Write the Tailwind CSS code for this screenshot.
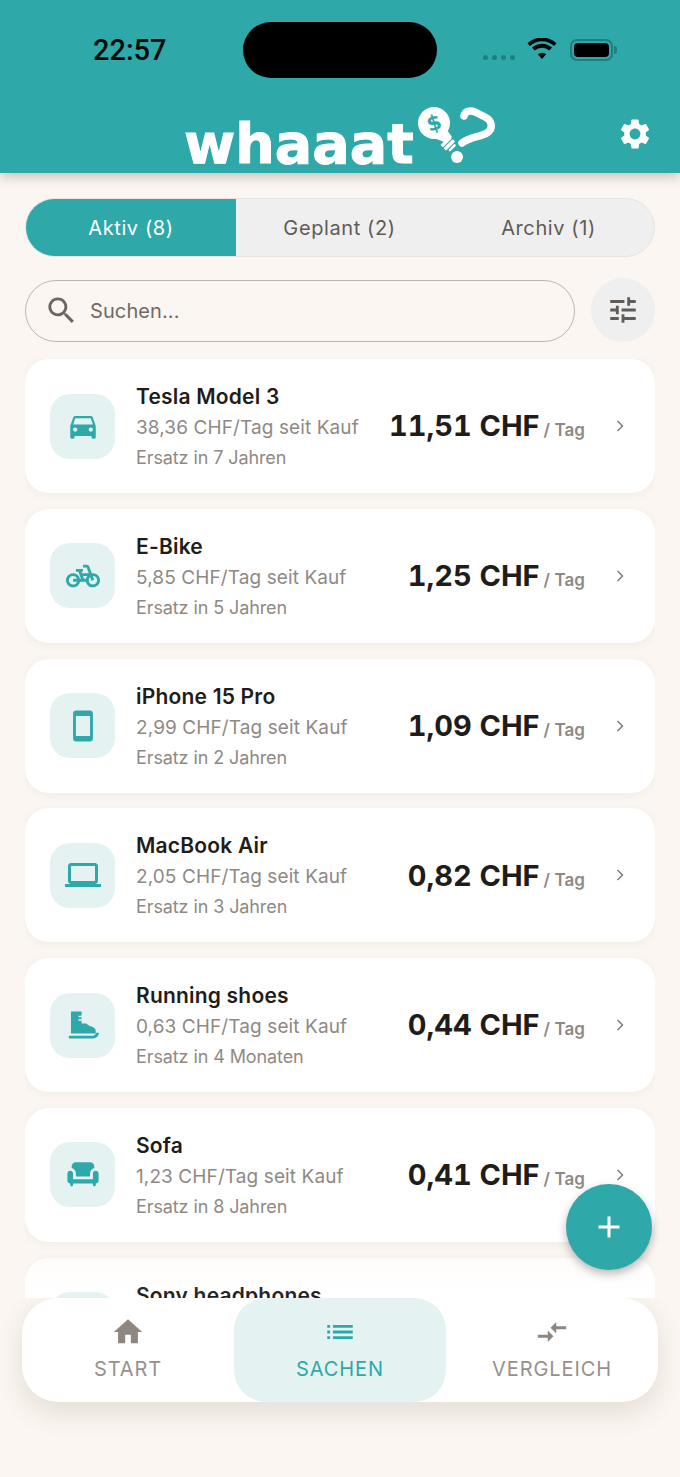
<!DOCTYPE html>
<html lang="de">
<head>
  <meta charset="UTF-8" />
  <meta name="viewport" content="width=device-width, initial-scale=1.0" />
  <title>Whaaat - Sachen</title>
  <script src="https://cdn.jsdelivr.net/npm/@tailwindcss/browser@4"></script>
</head>
<body class="bg-[#fbf6f1] text-[#1f1c1a] font-['Inter',sans-serif]">
<div class="relative w-[680px] h-[1477px] overflow-hidden flex flex-col">

  <!-- Header -->
  <header class="relative z-10 h-[173px] shrink-0 bg-[#2fa8a9] shadow-[0_3px_12px_rgba(60,50,40,0.3)]">
    <div class="flex items-start h-[100px]">
      <div class="w-[243px] pl-[93px] pt-[33px] text-[29px] leading-[34px] font-medium text-[#0a0a0a] font-['Roboto',sans-serif]">22:57</div>
      <div class="mt-[22px] w-[194px] h-[56px] rounded-[28px] bg-black"></div>
      <div class="ml-[46px] mt-[38px] flex items-center">
        <div class="flex gap-[4px] mt-[14px]">
          <span class="w-[5px] h-[5px] rounded-full bg-[#1f7f80]"></span>
          <span class="w-[5px] h-[5px] rounded-full bg-[#1f7f80]"></span>
          <span class="w-[5px] h-[5px] rounded-full bg-[#1f7f80]"></span>
          <span class="w-[5px] h-[5px] rounded-full bg-[#1f7f80]"></span>
        </div>
        <svg class="ml-[12px] mb-[2px]" width="30" height="22" viewBox="0 0 30 22"><path d="M15 21 10.800 16.200a6.400 6.400 0 0 1 8.400 0zM7.600 12.600a11 11 0 0 1 14.800 0l2.600-3a15 15 0 0 0-20 0zM.5 5.300l2.400 2.700a17.600 17.600 0 0 1 24.200 0l2.400-2.700a21 21 0 0 0-29 0z" fill="#050505"/></svg>
        <div class="ml-[13px] relative w-[43px] h-[22px] rounded-[7px] border-2 border-[#1f7f80] p-[2px]">
          <div class="w-full h-full rounded-[4px] bg-black"></div>
          <div class="absolute -right-[6px] top-[5px] w-[3px] h-[8px] rounded-r-sm bg-[#1f7f80]"></div>
        </div>
      </div>
    </div>
    <div class="relative flex h-[73px]">
      <div class="absolute left-[184px] top-[16px] text-[55.5px] leading-[56px] font-bold text-white font-['DejaVu_Sans',sans-serif] [-webkit-text-stroke:1px_white]">whaaat</div>
      <!-- bulb + question mark -->
      <svg class="absolute left-[415px] top-[6px]" width="84" height="60" viewBox="0 0 84 60">
        <circle cx="19" cy="17" r="16" fill="#fff"/>
        <path d="M32 24 37 31 29 36 14 30z" fill="#fff"/>
        <g transform="rotate(-45 33.500 38)" fill="#fff">
          <rect x="27" y="33" width="13" height="3.500" rx="1"/>
          <rect x="27" y="37.500" width="13" height="3.500" rx="1"/>
          <rect x="29" y="42" width="9" height="2.500" rx="1.200"/>
        </g>
        <text x="19" y="24" text-anchor="middle" font-family="DejaVu Sans" font-weight="700" font-size="21" fill="#2fa8a9" transform="rotate(-18 19 17)">$</text>
        <path d="M49 10C50 5 55 4 60 6L70 11C78 15 78 23 72 27 65 31 55 31 47 37" fill="none" stroke="#fff" stroke-width="7.500" stroke-linecap="round" stroke-linejoin="round"/>
        <circle cx="42" cy="51" r="6" fill="#fff"/>
      </svg>
      <svg class="absolute left-[617px] top-[16px]" width="36" height="36" viewBox="0 0 24 24" fill="#fff"><path d="M19.14 12.94c.04-.3.06-.61.06-.94 0-.32-.02-.64-.07-.94l2.03-1.58c.18-.14.23-.41.12-.61l-1.92-3.32c-.12-.22-.37-.29-.59-.22l-2.39.96c-.5-.38-1.03-.7-1.62-.94l-.36-2.54c-.04-.24-.24-.41-.48-.41h-3.84c-.24 0-.43.17-.47.41l-.36 2.54c-.59.24-1.13.57-1.62.94l-2.39-.96c-.22-.08-.47 0-.59.22L2.74 8.87c-.12.21-.08.47.12.61l2.03 1.58c-.05.3-.09.63-.09.94s.02.64.07.94l-2.03 1.58c-.18.14-.23.41-.12.61l1.92 3.32c.12.22.37.29.59.22l2.39-.96c.5.38 1.03.7 1.62.94l.36 2.54c.05.24.24.41.48.41h3.84c.24 0 .44-.17.47-.41l.36-2.54c.59-.24 1.13-.56 1.62-.94l2.39.96c.22.08.47 0 .59-.22l1.92-3.32c.12-.22.07-.47-.12-.61l-2.01-1.58zM12 15.6c-1.98 0-3.6-1.62-3.6-3.6s1.62-3.6 3.6-3.6 3.6 1.62 3.6 3.6-1.62 3.6-3.6 3.6z"/></svg>
    </div>
  </header>

  <!-- Tabs -->
  <div class="mx-[25px] mt-[25px] h-[59px] shrink-0 flex rounded-full bg-[#efefef] border border-[#e8e4df] overflow-hidden text-[20px] tracking-[0.6px] text-[#5f5b58]">
    <div class="w-[210px] flex items-center justify-center bg-[#2fa8a9] text-white">Aktiv (8)</div>
    <div class="w-[207px] flex items-center justify-center">Geplant (2)</div>
    <div class="flex-1 flex items-center justify-center">Archiv (1)</div>
  </div>

  <!-- Search -->
  <div class="mx-[25px] mt-[21px] shrink-0 flex items-center justify-between">
    <div class="mt-[1px] w-[550px] h-[62px] rounded-full border-[1.5px] border-[#bdb5ac] flex items-center pl-[18px] text-[20px] tracking-[0.1px] text-[#6f6a66]">
      <svg width="35" height="35" viewBox="0 0 24 24" fill="#6b6662"><path d="M15.5 14h-.79l-.28-.27C15.41 12.59 16 11.11 16 9.5 16 5.91 13.09 3 9.5 3S3 5.91 3 9.5 5.91 16 9.500 16c1.610 0 3.090-.59 4.230-1.570l.27.28v.79l5 4.990L20.490 19l-4.990-5zm-6 0C7.010 14 5 11.990 5 9.500S7.010 5 9.500 5 14 7.010 14 9.500 11.990 14 9.500 14z"/></svg>
      <span class="ml-[11px]">Suchen...</span>
    </div>
    <div class="w-[64px] h-[64px] rounded-full bg-[#efefef] flex items-center justify-center">
      <svg width="34" height="34" viewBox="0 0 24 24" fill="#605c59"><path d="M3 17v2h6v-2H3zM3 5v2h10V5H3zm10 16v-2h8v-2h-8v-2h-2v6h2zM7 9v2H3v2h4v2h2V9H7zm14 4v-2H11v2h10zm-6-4h2V7h4V5h-4V3h-2v6z"/></svg>
    </div>
  </div>

  <!-- List -->
  <div class="relative mt-[16px] pt-[1px] mx-[25px] h-[940px] shrink-0 overflow-hidden flex flex-col gap-[15.8px]">

    <div class="h-[134px] shrink-0 rounded-[24px] bg-white shadow-[0_2px_10px_rgba(90,70,50,0.06)] flex items-center pl-[25px]">
      <div class="w-[65px] h-[65px] rounded-[20px] bg-[#e4f3f2] flex items-center justify-center">
        <svg width="34" height="34" viewBox="0 0 24 24" fill="#2fa8a9"><path d="M18.92 6.01C18.72 5.42 18.16 5 17.5 5h-11c-.66 0-1.21.42-1.42 1.01L3 12v8c0 .55.45 1 1 1h1c.55 0 1-.45 1-1v-1h12v1c0 .55.45 1 1 1h1c.55 0 1-.45 1-1v-8l-2.08-5.99zM6.5 16c-.83 0-1.5-.67-1.5-1.5S5.67 13 6.5 13s1.5.67 1.5 1.5S7.33 16 6.5 16zm11 0c-.83 0-1.5-.67-1.5-1.5s.67-1.5 1.5-1.5 1.5.67 1.5 1.5-.67 1.5-1.5 1.5zM5 11l1.5-4.5h11L19 11H5z"/></svg>
      </div>
      <div class="ml-[21px] w-[238px] pt-[3px]">
        <div class="text-[21px] leading-[28px] font-semibold tracking-[0.2px] whitespace-nowrap">Tesla Model 3</div>
        <div class="mt-[3px] text-[19px] leading-[28px] tracking-[0.1px] text-[#8f8984] whitespace-nowrap">38,36 CHF/Tag seit Kauf</div>
        <div class="mt-[2px] text-[18px] leading-[28px] tracking-[-0.1px] text-[#8f8984] whitespace-nowrap">Ersatz in 7 Jahren</div>
      </div>
      <div class="flex-1 flex items-baseline justify-end text-[29px] font-bold tabular-nums whitespace-nowrap">11,51 CHF<span class="ml-[4px] text-[17px] font-semibold text-[#8f8984]">/ Tag</span></div>
      <svg class="ml-[23px] mr-[23px]" width="24" height="24" viewBox="0 0 24 24" fill="#7d7874"><path d="M10 6.500 9 7.500l4.500 4.500L9 16.500l1 1 5.500-5.500z"/></svg>
    </div>

    <div class="h-[134px] shrink-0 rounded-[24px] bg-white shadow-[0_2px_10px_rgba(90,70,50,0.06)] flex items-center pl-[25px]">
      <div class="w-[65px] h-[65px] rounded-[20px] bg-[#e4f3f2] flex items-center justify-center">
        <svg width="34" height="34" viewBox="0 0 24 24" fill="#2fa8a9"><path d="M18.18 10l-1.7-4.68C16.19 4.53 15.44 4 14.6 4H12v2h2.6l1.46 4h-4.81l-.36-1H12V7H7v2h1.75l1.82 5H9.9c-.44-2.23-2.31-3.88-4.65-3.99C2.45 9.87 0 12.2 0 15c0 2.8 2.2 5 5 5 2.46 0 4.45-1.69 4.9-4h4.2c.44 2.23 2.31 3.88 4.65 3.99 2.8.13 5.25-2.19 5.25-5 0-2.8-2.2-5-5-5h-.82zM7.82 16c-.4 1.17-1.49 2-2.82 2-1.68 0-3-1.32-3-3s1.32-3 3-3c1.33 0 2.42.83 2.82 2H5v2h2.82zm6.28-2h-1.4l-.73-2H15c-.44.58-.76 1.25-.9 2zm4.9 4c-1.68 0-3-1.32-3-3 0-.93.41-1.73 1.05-2.28l.96 2.64 1.88-.68-.97-2.67c.03 0 .06-.01.09-.01 1.68 0 3 1.32 3 3s-1.33 3-3.01 3z"/></svg>
      </div>
      <div class="ml-[21px] w-[238px] pt-[3px]">
        <div class="text-[21px] leading-[28px] font-semibold tracking-[0.2px] whitespace-nowrap">E-Bike</div>
        <div class="mt-[3px] text-[19px] leading-[28px] tracking-[0.1px] text-[#8f8984] whitespace-nowrap">5,85 CHF/Tag seit Kauf</div>
        <div class="mt-[2px] text-[18px] leading-[28px] tracking-[-0.1px] text-[#8f8984] whitespace-nowrap">Ersatz in 5 Jahren</div>
      </div>
      <div class="flex-1 flex items-baseline justify-end text-[29px] font-bold tabular-nums whitespace-nowrap">1,25 CHF<span class="ml-[4px] text-[17px] font-semibold text-[#8f8984]">/ Tag</span></div>
      <svg class="ml-[23px] mr-[23px]" width="24" height="24" viewBox="0 0 24 24" fill="#7d7874"><path d="M10 6.500 9 7.500l4.500 4.500L9 16.500l1 1 5.500-5.500z"/></svg>
    </div>

    <div class="h-[134px] shrink-0 rounded-[24px] bg-white shadow-[0_2px_10px_rgba(90,70,50,0.06)] flex items-center pl-[25px]">
      <div class="w-[65px] h-[65px] rounded-[20px] bg-[#e4f3f2] flex items-center justify-center">
        <svg width="34" height="34" viewBox="0 0 24 24" fill="#2fa8a9"><path d="M17 1.01L7 1c-1.100 0-2 .9-2 2v18c0 1.100.9 2 2 2h10c1.100 0 2-.9 2-2V3c0-1.100-.9-1.990-2-1.990zM17 19H7V5h10v14z"/></svg>
      </div>
      <div class="ml-[21px] w-[238px] pt-[3px]">
        <div class="text-[21px] leading-[28px] font-semibold tracking-[0.2px] whitespace-nowrap">iPhone 15 Pro</div>
        <div class="mt-[3px] text-[19px] leading-[28px] tracking-[0.1px] text-[#8f8984] whitespace-nowrap">2,99 CHF/Tag seit Kauf</div>
        <div class="mt-[2px] text-[18px] leading-[28px] tracking-[-0.1px] text-[#8f8984] whitespace-nowrap">Ersatz in 2 Jahren</div>
      </div>
      <div class="flex-1 flex items-baseline justify-end text-[29px] font-bold tabular-nums whitespace-nowrap">1,09 CHF<span class="ml-[4px] text-[17px] font-semibold text-[#8f8984]">/ Tag</span></div>
      <svg class="ml-[23px] mr-[23px]" width="24" height="24" viewBox="0 0 24 24" fill="#7d7874"><path d="M10 6.500 9 7.500l4.500 4.500L9 16.500l1 1 5.500-5.500z"/></svg>
    </div>

    <div class="h-[134px] shrink-0 rounded-[24px] bg-white shadow-[0_2px_10px_rgba(90,70,50,0.06)] flex items-center pl-[25px]">
      <div class="w-[65px] h-[65px] rounded-[20px] bg-[#e4f3f2] flex items-center justify-center">
        <svg width="36" height="36" viewBox="0 0 24 24" fill="#2fa8a9"><path d="M20 18c1.100 0 1.990-.9 1.990-2L22 6c0-1.100-.9-2-2-2H4c-1.100 0-2 .9-2 2v10c0 1.100.9 2 2 2H0v2h24v-2h-4zM4 6h16v10H4V6z"/></svg>
      </div>
      <div class="ml-[21px] w-[238px] pt-[3px]">
        <div class="text-[21px] leading-[28px] font-semibold tracking-[0.2px] whitespace-nowrap">MacBook Air</div>
        <div class="mt-[3px] text-[19px] leading-[28px] tracking-[0.1px] text-[#8f8984] whitespace-nowrap">2,05 CHF/Tag seit Kauf</div>
        <div class="mt-[2px] text-[18px] leading-[28px] tracking-[-0.1px] text-[#8f8984] whitespace-nowrap">Ersatz in 3 Jahren</div>
      </div>
      <div class="flex-1 flex items-baseline justify-end text-[29px] font-bold tabular-nums whitespace-nowrap">0,82 CHF<span class="ml-[4px] text-[17px] font-semibold text-[#8f8984]">/ Tag</span></div>
      <svg class="ml-[23px] mr-[23px]" width="24" height="24" viewBox="0 0 24 24" fill="#7d7874"><path d="M10 6.500 9 7.500l4.500 4.500L9 16.500l1 1 5.500-5.500z"/></svg>
    </div>

    <div class="h-[134px] shrink-0 rounded-[24px] bg-white shadow-[0_2px_10px_rgba(90,70,50,0.06)] flex items-center pl-[25px]">
      <div class="w-[65px] h-[65px] rounded-[20px] bg-[#e4f3f2] flex items-center justify-center">
        <svg width="34" height="34" viewBox="0 0 24 24" fill="#2fa8a9"><path fill-rule="evenodd" d="M3.500 2.500H11V11h3.400c.8 1 2 1.700 3.500 2.100 2 .5 3.100 1.600 3.100 3.400v1.500H3.500zM8.800 5.500v1H11v-1zM8.800 8v1H11V8z"/><path d="M2 19.500h17c1.400 0 2-.9 2.200-2h2.100c-.2 2.300-1.900 4-4.300 4H2z"/></svg>
      </div>
      <div class="ml-[21px] w-[238px] pt-[3px]">
        <div class="text-[21px] leading-[28px] font-semibold tracking-[0.2px] whitespace-nowrap">Running shoes</div>
        <div class="mt-[3px] text-[19px] leading-[28px] tracking-[0.1px] text-[#8f8984] whitespace-nowrap">0,63 CHF/Tag seit Kauf</div>
        <div class="mt-[2px] text-[18px] leading-[28px] tracking-[-0.1px] text-[#8f8984] whitespace-nowrap">Ersatz in 4 Monaten</div>
      </div>
      <div class="flex-1 flex items-baseline justify-end text-[29px] font-bold tabular-nums whitespace-nowrap">0,44 CHF<span class="ml-[4px] text-[17px] font-semibold text-[#8f8984]">/ Tag</span></div>
      <svg class="ml-[23px] mr-[23px]" width="24" height="24" viewBox="0 0 24 24" fill="#7d7874"><path d="M10 6.500 9 7.500l4.500 4.500L9 16.500l1 1 5.500-5.500z"/></svg>
    </div>

    <div class="h-[134px] shrink-0 rounded-[24px] bg-white shadow-[0_2px_10px_rgba(90,70,50,0.06)] flex items-center pl-[25px]">
      <div class="w-[65px] h-[65px] rounded-[20px] bg-[#e4f3f2] flex items-center justify-center">
        <svg width="34" height="34" viewBox="0 0 24 24" fill="#2fa8a9"><path d="M7 11v2h10v-2c0-1.860 1.280-3.410 3-3.860V6c0-1.650-1.350-3-3-3H7C5.350 3 4 4.350 4 6v1.140c1.720.45 3 2 3 3.860z"/><path d="M21 9c-1.100 0-2 .9-2 2v4H5v-4c0-1.100-.9-2-2-2s-2 .9-2 2v5c0 1.100.9 2 2 2v1c0 .55.45 1 1 1s1-.45 1-1v-1h14v1c0 .55.45 1 1 1s1-.45 1-1v-1c1.100 0 2-.9 2-2v-5c0-1.100-.9-2-2-2z"/></svg>
      </div>
      <div class="ml-[21px] w-[238px] pt-[3px]">
        <div class="text-[21px] leading-[28px] font-semibold tracking-[0.2px] whitespace-nowrap">Sofa</div>
        <div class="mt-[3px] text-[19px] leading-[28px] tracking-[0.1px] text-[#8f8984] whitespace-nowrap">1,23 CHF/Tag seit Kauf</div>
        <div class="mt-[2px] text-[18px] leading-[28px] tracking-[-0.1px] text-[#8f8984] whitespace-nowrap">Ersatz in 8 Jahren</div>
      </div>
      <div class="flex-1 flex items-baseline justify-end text-[29px] font-bold tabular-nums whitespace-nowrap">0,41 CHF<span class="ml-[4px] text-[17px] font-semibold text-[#8f8984]">/ Tag</span></div>
      <svg class="ml-[23px] mr-[23px]" width="24" height="24" viewBox="0 0 24 24" fill="#7d7874"><path d="M10 6.500 9 7.500l4.500 4.500L9 16.500l1 1 5.500-5.500z"/></svg>
    </div>

    <div class="h-[134px] shrink-0 rounded-[24px] bg-white shadow-[0_2px_10px_rgba(90,70,50,0.06)] flex items-center pl-[25px]">
      <div class="w-[65px] h-[65px] rounded-[20px] bg-[#e4f3f2]"></div>
      <div class="ml-[21px] w-[238px] pt-[3px]">
        <div class="text-[21px] leading-[28px] font-semibold tracking-[0.2px] whitespace-nowrap">Sony headphones</div>
        <div class="mt-[3px] text-[19px] leading-[28px] text-[#8f8984]">&nbsp;</div>
        <div class="mt-[2px] text-[18px] leading-[28px] text-[#8f8984]">&nbsp;</div>
      </div>
    </div>

    <!-- fade over the last row -->
    <div class="absolute inset-x-0 bottom-0 h-[40px] bg-gradient-to-b from-[#fbf6f1]/30 to-transparent"></div>
  </div>

  <!-- Bottom nav -->
  <nav class="mx-[22px] h-[104px] shrink-0 rounded-[36px] bg-white shadow-[0_10px_28px_rgba(90,70,50,0.14)] flex text-[20px] tracking-[0.9px] text-[#97908b]">
    <div class="w-[212px] flex flex-col items-center pt-[17px]">
      <svg width="34" height="34" viewBox="0 0 24 24" fill="#8f8680"><path d="M10 20v-6h4v6h5v-8h3L12 3 2 12h3v8z"/></svg>
      <span class="mt-[6px] leading-[28px]">START</span>
    </div>
    <div class="w-[212px] flex flex-col items-center pt-[17px] rounded-[32px] bg-[#e4f3f2] text-[#2fa8a9]">
      <svg width="34" height="34" viewBox="0 0 24 24" fill="#2fa8a9"><path d="M3 13h2v-2H3v2zm0 4h2v-2H3v2zm0-8h2V7H3v2zm4 4h14v-2H7v2zm0 4h14v-2H7v2zM7 7v2h14V7H7z"/></svg>
      <span class="mt-[6px] leading-[28px]">SACHEN</span>
    </div>
    <div class="w-[212px] flex flex-col items-center pt-[17px]">
      <svg width="34" height="34" viewBox="0 0 24 24" fill="#8f8680"><path d="M9.010 14H2v2h7.010v3L13 15l-3.990-4v3zm5.980-1v-3H22V8h-7.010V5L11 9l3.990 4z"/></svg>
      <span class="mt-[6px] leading-[28px]">VERGLEICH</span>
    </div>
  </nav>

  <!-- Add button -->
  <div class="absolute left-[566px] top-[1184px] w-[86px] h-[86px] rounded-full bg-[#2fa8a9] shadow-[0_4px_10px_rgba(0,0,0,0.28)] flex items-center justify-center">
    <svg width="36" height="36" viewBox="0 0 24 24" fill="#fff"><path d="M19 13h-6v6h-2v-6H5v-2h6V5h2v6h6v2z"/></svg>
  </div>
</div>
</body>
</html>
